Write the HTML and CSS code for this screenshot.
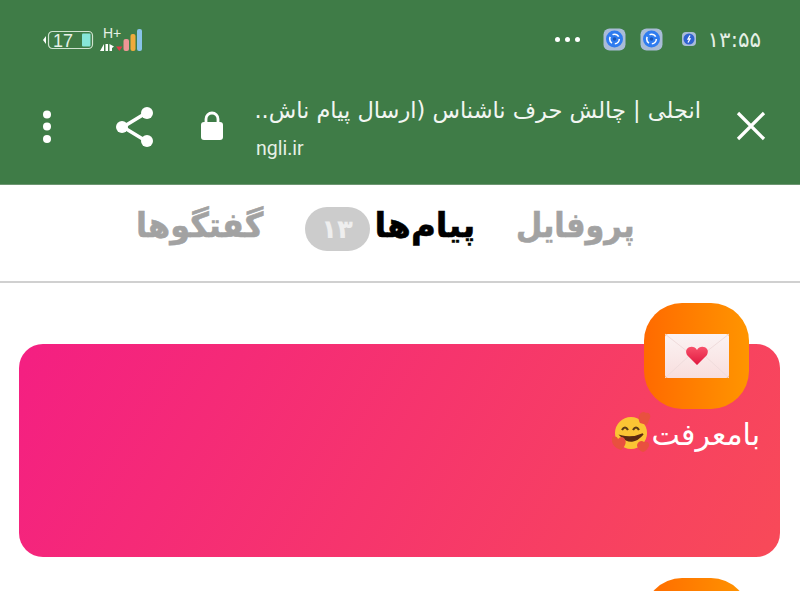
FILE: index.html
```html
<!DOCTYPE html>
<html lang="fa">
<head>
  <meta charset="UTF-8" />
  <meta name="viewport" content="width=device-width, initial-scale=1.0" />
  <title>انجلی</title>
  <link rel="stylesheet" href="styles.css">
</head>
<body>
  <header class="browser-bar">
    <div class="status-bar">
      <div class="status-left">
        <svg class="battery" width="52" height="20" viewBox="0 0 52 20">
          <path d="M4 6v8L1 10z" fill="#fff"/>
          <rect x="6.500" y="1.500" width="44" height="17" rx="4" fill="none" stroke="#cfe3d0" stroke-width="1.200"/>
          <rect x="40" y="3.500" width="8.500" height="13" rx="1" fill="#86e6d8"/>
        </svg>
        <span class="battery-level">17</span>
        <div class="signal">
          <span class="net-type">H+</span>
          <svg width="44" height="26" viewBox="0 0 44 26">
            <path d="M5 18v7L1 25zM6.500 18h2.500v7H6.500zM10.500 18v7H13v-3l2-1.500z" fill="#fff"/>
            <path d="M17 20.500h6.500l-3.200 4.500z" fill="#df3b4a"/>
            <rect x="24.500" y="13" width="5.500" height="12" rx="2" fill="#ee9696"/>
            <rect x="31.500" y="8" width="5" height="17" rx="2" fill="#eeaa3c"/>
            <rect x="38" y="3" width="5" height="22" rx="2" fill="#88c3e8"/>
          </svg>
        </div>
      </div>
      <div class="status-right">
        <span class="more-dots"><i></i><i></i><i></i></span>
        <svg class="app-icon" width="23" height="23" viewBox="0 0 23 23">
          <rect x=".5" y=".5" width="22" height="22" rx="6" fill="#a9bcd8"/>
          <circle cx="11.500" cy="11" r="8.500" fill="#2f7cf0"/>
          <circle cx="11.500" cy="11" r="4.800" fill="none" stroke="#fff" stroke-width="1.600" stroke-dasharray="7 3"/>
          <circle cx="11.500" cy="11" r="1.800" fill="#1b56b8"/>
        </svg>
        <svg class="app-icon" width="23" height="23" viewBox="0 0 23 23">
          <rect x=".5" y=".5" width="22" height="22" rx="6" fill="#a9bcd8"/>
          <circle cx="11.500" cy="11" r="8.500" fill="#2f7cf0"/>
          <circle cx="11.500" cy="11" r="4.800" fill="none" stroke="#fff" stroke-width="1.600" stroke-dasharray="7 3"/>
          <circle cx="11.500" cy="11" r="1.800" fill="#1b56b8"/>
        </svg>
        <svg class="small-icon" width="14" height="14" viewBox="0 0 14 14">
          <rect width="14" height="14" rx="4" fill="#a9bcd8"/>
          <circle cx="7" cy="7" r="5.500" fill="#2f62d0"/>
          <path d="M8 3.500 6 7h2l-2 3.500" fill="none" stroke="#fff" stroke-width="1.300"/>
        </svg>
        <span class="clock">۱۳:۵۵</span>
      </div>
    </div>
    <div class="tool-bar">
      <div class="tool-actions">
        <svg width="10" height="34" viewBox="0 0 10 34">
          <circle cx="5" cy="4.500" r="4" fill="#fff"/>
          <circle cx="5" cy="16.500" r="4" fill="#fff"/>
          <circle cx="5" cy="29" r="4" fill="#fff"/>
        </svg>
        <svg class="share" width="40" height="42" viewBox="0 0 40 42">
          <path d="M32 7 9 21l23 14" fill="none" stroke="#fff" stroke-width="3.500"/>
          <circle cx="33" cy="7" r="6" fill="#fff"/>
          <circle cx="8" cy="21" r="6" fill="#fff"/>
          <circle cx="33" cy="35" r="6" fill="#fff"/>
        </svg>
        <svg class="lock" width="24" height="30" viewBox="0 0 24 30">
          <path d="M6 13V9a6 6 0 0 1 12 0v4" fill="none" stroke="#fff" stroke-width="2.800"/>
          <rect x="1" y="12" width="22" height="18" rx="3" fill="#fff"/>
        </svg>
      </div>
      <div class="page-info">
        <div class="page-title">انجلی | چالش حرف ناشناس (ارسال پیام ناش..</div>
        <div class="page-url">ngli.ir</div>
      </div>
      <svg class="close" width="30" height="30" viewBox="0 0 30 30">
        <path d="M2 2l26 26M28 2 2 28" stroke="#fff" stroke-width="3.200"/>
      </svg>
    </div>
  </header>

  <nav class="tabs">
    <span class="tab tab-chats">گفتگوها</span>
    <span class="tab active">
      <span class="badge">۱۳</span>پیام‌ها
    </span>
    <span class="tab tab-profile">پروفایل</span>
  </nav>

  <main class="messages">
    <section class="message">
      <div class="message-card">
        <div class="message-icon">
          <svg width="70" height="50" viewBox="0 0 70 50">
            <defs>
              <linearGradient id="paper" x1="0" y1="0" x2="0" y2="1">
                <stop offset="0" stop-color="#fbf3f3"/>
                <stop offset="1" stop-color="#f8dede"/>
              </linearGradient>
              <linearGradient id="heart" x1="0" y1="0" x2="0" y2="1">
                <stop offset="0" stop-color="#f8506a"/>
                <stop offset="1" stop-color="#e0183f"/>
              </linearGradient>
            </defs>
            <rect x="3" y="3" width="64" height="44" rx="3" fill="url(#paper)"/>
            <path d="M3 47 28 24M67 47 42 24M3 3l32 25L67 3" fill="none" stroke="#f0dcdc" stroke-width="1"/>
            <path d="M35 34 25 24c-4-8 7-11 10-5 3-6 14-3 10 5z" fill="url(#heart)"/>
          </svg>
        </div>
        <div class="message-text">
          <svg class="emoji" width="40" height="40" viewBox="0 0 40 40">
            <circle cx="19" cy="21" r="16" fill="#fbc534"/>
            <path d="M10 18q3-5 6 0M21 18q3-5 6 0" fill="none" stroke="#5b3a16" stroke-width="2.200"/>
            <path d="M9 24q11 11 22-2-11 5-22 2z" fill="#5b2a12" stroke="#5b2a12" stroke-width="1.500"/>
            <path d="M0 26c-1 6 3 10 9 12 5-4 6-9 3-12-2-2-4-1-6 1-1-3-5-3-6-1z" fill="#e9503f"/>
            <path d="M25 33c1-4 5-5 7-3 2-1 6 0 5 4-1 2-3 5-6 6-3-1-6-4-6-7z" fill="#e9503f"/>
            <path d="M27 4c1-4 5-5 7-3 3-1 5 2 4 5l-3 7-7-2c-1-2-2-5-1-7z" fill="#e9503f"/>
          </svg>
          <span>بامعرفت</span>
        </div>
      </div>
    </section>
    <section class="message">
      <div class="message-card">
        <div class="message-icon"></div>
      </div>
    </section>
  </main>
</body>
</html>
```

FILE: styles.css
```css
html, body {
  height: 100%;
}

body {
  margin: 0;
  overflow: hidden;
  background-color: #fff;
  font-family: "DejaVu Sans", "Noto Sans", sans-serif;
}

.browser-bar {
  height: 185px;
  box-sizing: border-box;
  background-color: #3f7c47;
  border-bottom: 1px solid #6d9672;
  color: #fff;
}

.status-bar {
  height: 78px;
  box-sizing: border-box;
  padding: 26px 39px 0 42px;
  display: flex;
  justify-content: space-between;
  align-items: flex-start;
}

.status-left {
  position: relative;
  display: flex;
  align-items: flex-start;
  gap: 5px;
}

.battery {
  margin-top: 4px;
}

.battery-level {
  position: absolute;
  left: 11px;
  top: 5px;
  font-family: "Liberation Sans", sans-serif;
  font-size: 18px;
  line-height: 20px;
  color: #e6f0e6;
}

.signal {
  position: relative;
  width: 44px;
  height: 26px;
}

.signal svg {
  display: block;
}

.net-type {
  position: absolute;
  left: 4px;
  top: 0;
  font-family: "Liberation Sans", sans-serif;
  font-size: 14px;
  line-height: 14px;
  color: #e6f0e6;
}

.status-right {
  display: flex;
  align-items: center;
  height: 26px;
}

.more-dots {
  display: flex;
  gap: 5px;
  margin-right: 23px;
}

.more-dots i {
  width: 5px;
  height: 5px;
  border-radius: 50%;
  background-color: #fff;
}

.app-icon {
  margin-right: 14px;
}

.app-icon + .small-icon {
  margin-left: 5px;
}

.small-icon {
  margin-right: 12px;
}

.clock {
  font-size: 21.500px;
  color: #e6f0e6;
}

.tool-bar {
  height: 106px;
  box-sizing: border-box;
  padding: 11px 34px 0 42px;
  display: flex;
  align-items: flex-start;
}

.tool-actions {
  display: flex;
  align-items: center;
  height: 75px;
}

.tool-actions .share {
  margin-left: 62px;
}

.tool-actions .lock {
  margin-left: 46px;
  margin-bottom: 3px;
}

.page-info {
  flex: 1;
  min-width: 0;
  direction: rtl;
  padding-top: 5px;
  margin-right: 35px;
  margin-left: 32px;
}

.page-title {
  font-size: 22.500px;
  line-height: 32px;
  white-space: nowrap;
  color: #f2f6f2;
}

.page-url {
  direction: ltr;
  font-family: "Roboto", sans-serif;
  font-size: 19.500px;
  line-height: 24px;
  margin-top: 11px;
  color: #e6f0e6;
}

.close {
  margin-top: 22px;
}

.tabs {
  height: 98px;
  box-sizing: border-box;
  border-bottom: 2px solid #d0d0d0;
  display: flex;
  align-items: flex-start;
  gap: 41px;
  padding: 9px 0 0 136px;
}

.tab {
  display: flex;
  align-items: center;
  font-size: 34px;
  font-weight: bold;
  line-height: 62px;
  color: #a2a2a2;
  -webkit-text-stroke: 0.6px currentColor;
}

/* the original tab font is narrower than DejaVu Bold */
.tab-chats {
  transform: scaleX(0.94);
  transform-origin: left center;
  margin-right: -8px;
}

.tab-profile {
  transform: scaleX(0.89);
  transform-origin: left center;
}

.tab.active {
  color: #000;
}

.badge {
  width: 65px;
  height: 44px;
  border-radius: 22px;
  margin-right: 5px;
  margin-top: 8px;
  background-color: #cccccc;
  color: #eee;
  font-size: 26px;
  line-height: 44px;
  text-align: center;
  -webkit-text-stroke: 0;
}

.messages {
  padding: 0 20px 0 19px;
}

.message {
  padding-top: 61px;
}

.message + .message {
  padding-top: 62px;
}

.message-card {
  height: 213px;
  border-radius: 24px;
  background: linear-gradient(120deg, #f41f82, #f84a58);
  padding-right: 31px;
  direction: rtl;
}

/* sits half out of the top of the card */
.message-icon {
  width: 105px;
  height: 106px;
  position: relative;
  top: -41px;
  border-radius: 38px;
  background: linear-gradient(90deg, #ff6a00, #ff9500);
  display: flex;
  align-items: center;
  justify-content: center;
}

.message-text {
  margin: -38px -11px 0 0;
  display: flex;
  align-items: center;
  flex-direction: row-reverse;
  width: max-content;
  font-size: 30px;
  line-height: 44px;
  color: #fff;
}

.emoji {
  margin-bottom: 5px;
  margin-left: 1px;
}
```
